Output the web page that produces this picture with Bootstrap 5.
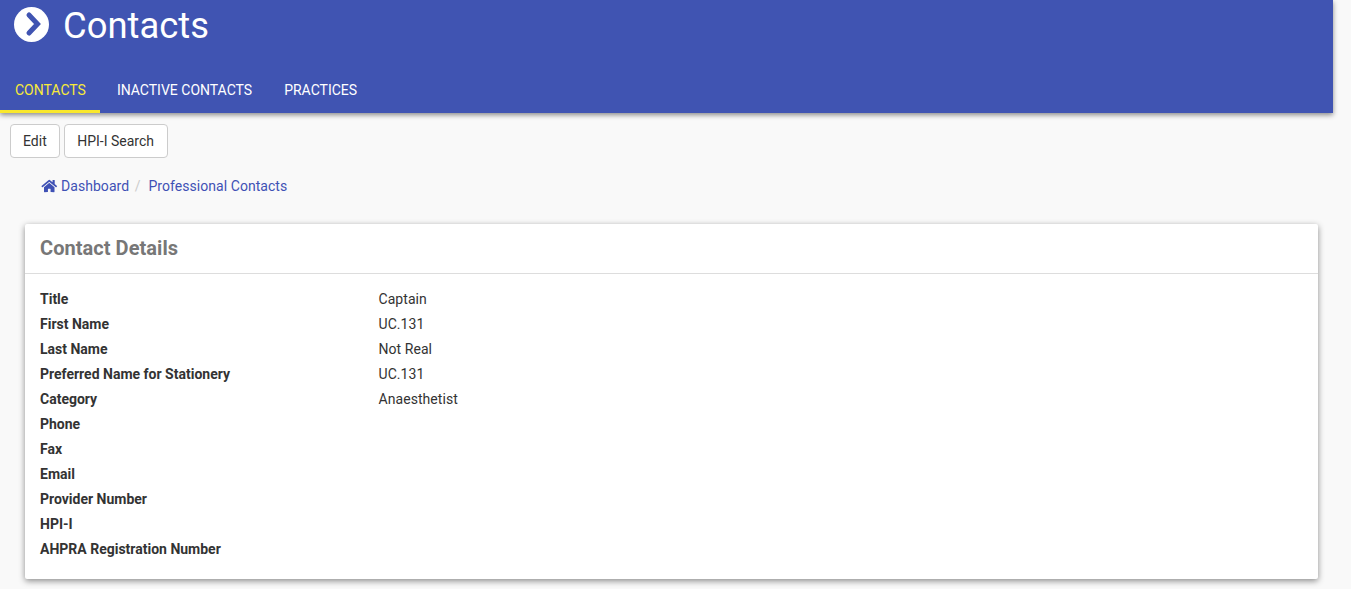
<!DOCTYPE html>
<html lang="en">
<head>
  <meta charset="UTF-8" />
  <meta name="viewport" content="width=device-width, initial-scale=1.0"/>
  <title>Contacts</title>
  <link rel="stylesheet" href="https://cdn.jsdelivr.net/npm/bootstrap@5.3.0/dist/css/bootstrap.min.css" />
  <style>
    html, body { height: 100%; overflow: hidden; }
    body { font-family: Roboto, sans-serif; font-size: 14px; color: #333; background-color: #f9f9f9; padding-right: 18px; text-rendering: optimizeSpeed; }
    .app-header { background-color: #4054b2; height: 113px; box-shadow: 0 2px 5px rgba(0,0,0,.45); }
    .app-title { height: 70px; padding: 7px 0 0 14px; gap: 14px; }
    .app-title svg { width: 35px; height: 35px; }
    .app-title h1 { font-size: 36.4px; font-weight: 400; color: #fff; margin: 0; line-height: 38px; }
    .app-tabs { height: 43px; }
    .app-tabs a { color: #fff; text-decoration: none; text-transform: uppercase; padding: 12px 15px 0 15px; margin-right: 2px; height: 43px; line-height: 16px; }
    .app-tabs a.current { color: #f7ea3a; border-bottom: 3px solid #fae82c; padding-right: 14px; }
    .tool-row { padding: 11px 10px 0; gap: 4px; }
    .tool-btn { font-size: 14px; color: #333; background: #fff; border: 1px solid #ccc; border-radius: 4px; padding: 0 12.5px; height: 34px; line-height: 32px; }
    .tool-btn:first-child { padding: 0 12px; }
    .crumbs { margin: 0; padding: 20px 0 0 41px; height: 66px; line-height: 16px; }
    .crumbs a { color: #3f51b5; text-decoration: none; letter-spacing: .05px; }
    .crumbs svg { width: 16.5px; height: 14px; vertical-align: -2px; fill: #3f51b5; }
    .crumbs .sep { color: #ccc; padding: 0 4.5px 0 5.5px; }
    .detail-card { margin: 0 15px 0 25px; background: #fff; border-radius: 2px; border: 0; box-shadow: 0 2px 6px rgba(0,0,0,.45); height: 355px; }
    .detail-head { height: 50px; padding: 12px 15px 0; border-bottom: 1px solid #ddd; }
    .detail-head h2 { font-size: 20px; font-weight: 700; color: #777; margin: 0; line-height: 24px; letter-spacing: .05px; }
    .detail-body { padding: 12.5px 15px 0; }
    .detail-line { height: 25px; line-height: 25px; }
    .detail-key { width: 338.5px; font-weight: 700; }
    .detail-val { letter-spacing: .06px; }
  </style>
</head>
<body>
  <header class="app-header">
    <div class="app-title d-flex align-items-start">
      <svg viewBox="0 0 35 35">
        <circle cx="17.5" cy="17.5" r="17.5" fill="#fff"/>
        <path d="M15 8 L23.5 17 L15 26" fill="none" stroke="#4054b2" stroke-width="5" stroke-linecap="round"/>
      </svg>
      <h1>Contacts</h1>
    </div>
    <nav class="app-tabs d-flex">
      <a class="current" href="#">Contacts</a>
      <a href="#">Inactive Contacts</a>
      <a href="#">Practices</a>
    </nav>
  </header>

  <div class="tool-row d-flex">
    <button type="button" class="btn tool-btn">Edit</button>
    <button type="button" class="btn tool-btn">HPI-I Search</button>
  </div>

  <div class="crumbs">
    <a href="#"><svg viewBox="0 0 576 512"><path d="M280.37 148.26L96 300.11V464a16 16 0 0 0 16 16l112.06-.29a16 16 0 0 0 15.92-16V368a16 16 0 0 1 16-16h64a16 16 0 0 1 16 16v95.64a16 16 0 0 0 16 16.05L464 480a16 16 0 0 0 16-16V300L295.67 148.26a12.19 12.19 0 0 0-15.3 0zM571.6 251.47L488 182.56V44.05a12 12 0 0 0-12-12h-56a12 12 0 0 0-12 12v72.61L318.47 43a48 48 0 0 0-61 0L4.34 251.47a12 12 0 0 0-1.6 16.9l25.5 31A12 12 0 0 0 45.15 301l235.22-193.74a12.19 12.19 0 0 1 15.3 0L530.9 301a12 12 0 0 0 16.9-1.6l25.5-31a12 12 0 0 0-1.7-16.93z"/></svg> Dashboard</a><span class="sep">/</span> <a href="#">Professional Contacts</a>
  </div>

  <section class="detail-card">
    <div class="detail-head"><h2>Contact Details</h2></div>
    <div class="detail-body">
      <div class="detail-line d-flex"><div class="detail-key">Title</div><div class="detail-val">Captain</div></div>
      <div class="detail-line d-flex"><div class="detail-key">First Name</div><div class="detail-val">UC.131</div></div>
      <div class="detail-line d-flex"><div class="detail-key">Last Name</div><div class="detail-val">Not Real</div></div>
      <div class="detail-line d-flex"><div class="detail-key">Preferred Name for Stationery</div><div class="detail-val">UC.131</div></div>
      <div class="detail-line d-flex"><div class="detail-key">Category</div><div class="detail-val">Anaesthetist</div></div>
      <div class="detail-line d-flex"><div class="detail-key">Phone</div></div>
      <div class="detail-line d-flex"><div class="detail-key">Fax</div></div>
      <div class="detail-line d-flex"><div class="detail-key">Email</div></div>
      <div class="detail-line d-flex"><div class="detail-key">Provider Number</div></div>
      <div class="detail-line d-flex"><div class="detail-key">HPI-I</div></div>
      <div class="detail-line d-flex"><div class="detail-key">AHPRA Registration Number</div></div>
    </div>
  </section>

  <script src="https://cdn.jsdelivr.net/npm/bootstrap@5.3.0/dist/js/bootstrap.bundle.min.js"></script>
</body>
</html>
